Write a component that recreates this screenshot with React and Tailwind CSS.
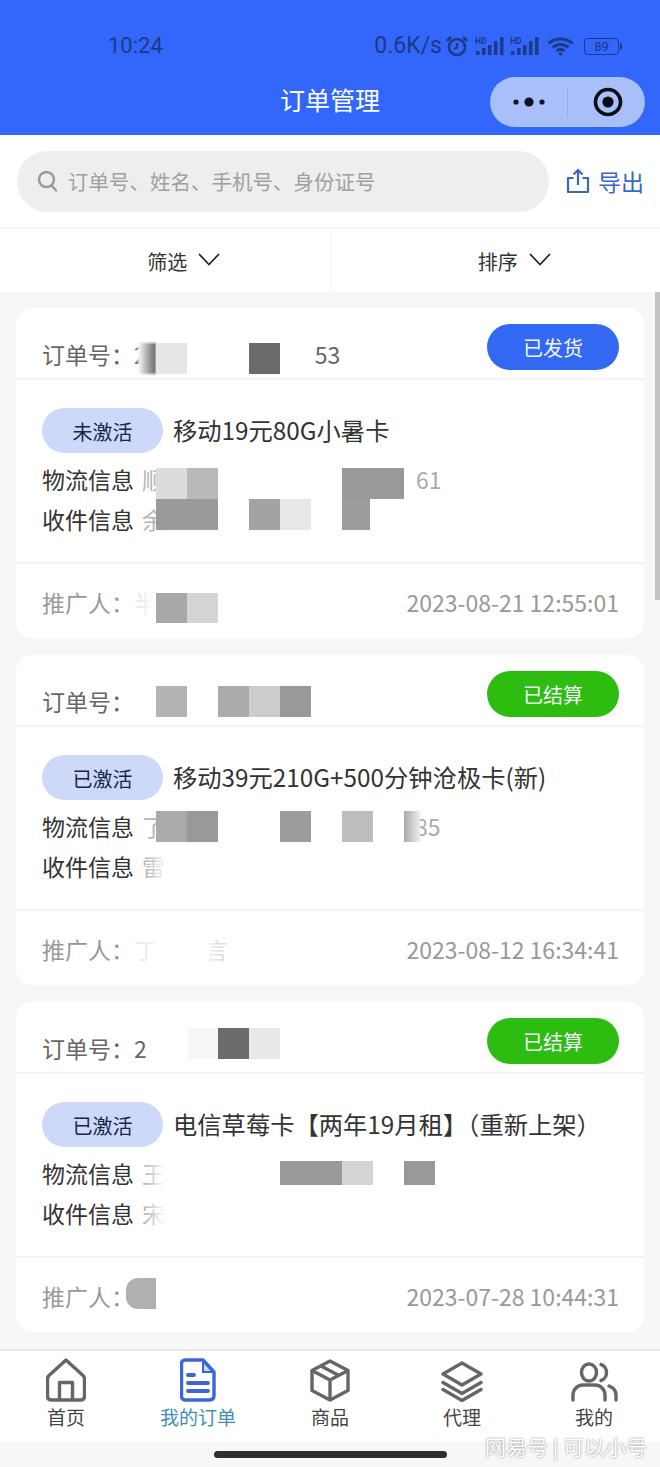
import React from "react";

const cjk = "font-['Noto_Sans_CJK_SC','Noto_Sans',sans-serif]";

const orders = [
  {
    no: "2",
    noTail: "53",
    noTailClass: "ml-[168px]",
    status: "已发货",
    statusClass: "bg-[#3268f2]",
    tag: "未激活",
    title: "移动19元80G小暑卡",
    logistics: "顺",
    logisticsTail: "61",
    logisticsTailClass: "ml-[251px]",
    receiver: "余",
    promoter: "半",
    date: "2023-08-21 12:55:01",
    tiles: [
      "left-[122px] top-[35px] w-[18px] h-[31px] bg-gradient-to-r from-[#ffffff] to-[#666666] blur-[1px]",
      "left-[140px] top-[35px] w-[31px] h-[31px] bg-[#e6e6e6]",
      "left-[233px] top-[35px] w-[31px] h-[31px] bg-[#6b6b6b]",
      "left-[140px] top-[160px] w-[31px] h-[31px] bg-[#dcdcdc]",
      "left-[171px] top-[160px] w-[31px] h-[31px] bg-[#b9b9b9]",
      "left-[326px] top-[160px] w-[62px] h-[31px] bg-[#999999]",
      "left-[140px] top-[191px] w-[62px] h-[31px] bg-[#9a9a9a]",
      "left-[233px] top-[191px] w-[31px] h-[31px] bg-[#a3a3a3]",
      "left-[264px] top-[191px] w-[31px] h-[31px] bg-[#e8e8e8]",
      "left-[326px] top-[191px] w-[28px] h-[31px] bg-[#9c9c9c]",
      "left-[124px] top-[280px] w-[16px] h-[34px] bg-gradient-to-r from-transparent to-white",
      "left-[140px] top-[280px] w-[31px] h-[35px] bg-white",
      "left-[140px] top-[285px] w-[31px] h-[30px] bg-[#a8a8a8]",
      "left-[171px] top-[285px] w-[31px] h-[30px] bg-[#d4d4d4]",
    ],
  },
  {
    no: "",
    noTail: "",
    status: "已结算",
    statusClass: "bg-[#2dbd10]",
    tag: "已激活",
    title: "移动39元210G+500分钟沧极卡(新)",
    logistics: "了",
    logisticsTail: "85",
    logisticsTailClass: "ml-[250px]",
    receiver: "雷",
    promoter: "丁",
    promoterTail: "言",
    date: "2023-08-12 16:34:41",
    tiles: [
      "left-[140px] top-[31px] w-[31px] h-[31px] bg-[#b4b4b4]",
      "left-[202px] top-[31px] w-[31px] h-[31px] bg-[#ababab]",
      "left-[233px] top-[31px] w-[31px] h-[31px] bg-[#cccccc]",
      "left-[264px] top-[31px] w-[31px] h-[31px] bg-[#999999]",
      "left-[140px] top-[156px] w-[31px] h-[31px] bg-[#aaaaaa]",
      "left-[171px] top-[156px] w-[31px] h-[31px] bg-[#999999]",
      "left-[264px] top-[156px] w-[31px] h-[31px] bg-[#9c9c9c]",
      "left-[326px] top-[156px] w-[31px] h-[31px] bg-[#bdbdbd]",
      "left-[388px] top-[156px] w-[16px] h-[31px] bg-gradient-to-r from-[#aaaaaa] to-[#eeeeee]",
      "left-[130px] top-[197px] w-[22px] h-[32px] bg-gradient-to-r from-transparent to-white",
      "left-[124px] top-[280px] w-[24px] h-[34px] bg-gradient-to-r from-transparent to-white",
      "left-[187px] top-[280px] w-[16px] h-[34px] bg-gradient-to-r from-white to-transparent",
    ],
  },
  {
    no: "2",
    noTail: "",
    status: "已结算",
    statusClass: "bg-[#2dbd10]",
    tag: "已激活",
    title: "电信草莓卡【两年19月租】（重新上架）",
    logistics: "王",
    logisticsTail: "",
    receiver: "宋",
    promoter: "",
    date: "2023-07-28 10:44:31",
    tiles: [
      "left-[172px] top-[26px] w-[31px] h-[31px] bg-[#f6f6f6]",
      "left-[202px] top-[26px] w-[31px] h-[31px] bg-[#6b6b6b]",
      "left-[233px] top-[26px] w-[31px] h-[31px] bg-[#e9e9e9]",
      "left-[264px] top-[159px] w-[62px] h-[24px] bg-[#999999]",
      "left-[326px] top-[159px] w-[31px] h-[24px] bg-[#d4d4d4]",
      "left-[388px] top-[159px] w-[31px] h-[24px] bg-[#999999]",
      "left-[128px] top-[156px] w-[22px] h-[32px] bg-gradient-to-r from-transparent to-white",
      "left-[128px] top-[197px] w-[22px] h-[32px] bg-gradient-to-r from-transparent to-white",
      "left-[110px] top-[276px] w-[30px] h-[31px] rounded-l-[12px] bg-[#b0b0b0]",
    ],
  },
];

function OrderCard({ order }) {
  return (
    <div className="relative h-[330px] shrink-0 overflow-hidden rounded-[16px] bg-white">
      <div className="flex h-[72px] justify-between border-b-2 border-[#f3f3f3] pl-[26px] pr-[25px]">
        <div className="mt-[28px] flex h-[36px] items-center text-[23px] text-[#666666]">
          <span>订单号：</span>
          <span>{order.no}</span>
          {order.noTail && <span className={order.noTailClass}>{order.noTail}</span>}
        </div>
        <div className={`mt-[16px] flex h-[46px] w-[132px] items-center justify-center rounded-full pt-[2px] text-[20px] text-[#f2f6ff] ${order.statusClass}`}>
          {order.status}
        </div>
      </div>

      <div className="h-[184px] border-b-2 border-[#f3f3f3] pl-[26px] pt-[28px]">
        <div className="flex h-[45px] items-center">
          <div className="flex h-[45px] w-[121px] items-center justify-center rounded-full bg-[#ccd9f8] pt-[2px] text-[20px] text-[#1a2544]">
            {order.tag}
          </div>
          <div className="ml-[10px] text-[24.3px] text-[#333333]">{order.title}</div>
        </div>
        <div className="mt-[6px] flex h-[40px] items-center text-[23px] text-[#333333]">
          <span>物流信息</span>
          <span className="ml-[8px] text-[#b5b5b5]">{order.logistics}</span>
          {order.logisticsTail && (
            <span className={`text-[#aaaaaa] ${order.logisticsTailClass}`}>{order.logisticsTail}</span>
          )}
        </div>
        <div className="flex h-[40px] items-center text-[23px] text-[#333333]">
          <span>收件信息</span>
          <span className="ml-[8px] text-[#b5b5b5]">{order.receiver}</span>
        </div>
      </div>

      <div className="flex h-[74px] items-center justify-between pl-[26px] pr-[25px] pt-[3px] text-[23px] text-[#999999]">
        <div className="flex items-center">
          <span>推广人：</span>
          <span className="text-[#e8e8e8]">{order.promoter}</span>
          {order.promoterTail && <span className="ml-[48px] text-[#dddddd]">{order.promoterTail}</span>}
        </div>
        <span>{order.date}</span>
      </div>

      {order.tiles.map((t) => (
        <div key={t} className={`absolute ${t}`} />
      ))}
    </div>
  );
}

function StatusIcons() {
  return (
    <div className="flex items-center text-[#1c3a86]">
      <svg width="24" height="22" viewBox="0 0 24 22" fill="none" stroke="currentColor" className="ml-[3px]">
        <circle cx="12" cy="12" r="8" strokeWidth="2.6" />
        <path d="M12 8v4.500l-3 1.500" strokeWidth="2.2" />
        <path d="M2 6l4-4M22 6l-4-4" strokeWidth="2.8" />
      </svg>
      {[0, 1].map((i) => (
        <svg key={i} width="29" height="20" viewBox="0 0 29 20" className="ml-[6px]" fill="currentColor">
          <rect x="1" y="15" width="3.500" height="4" />
          <rect x="7" y="12" width="3.500" height="7" />
          <rect x="13" y="9" width="3.500" height="10" />
          <rect x="19" y="5" width="3.500" height="14" />
          <rect x="25" y="1" width="3.500" height="18" />
          <text x="0" y="8" fontSize="8.500" fontWeight="700" fontFamily="Roboto, sans-serif">HD</text>
        </svg>
      ))}
      <svg width="27" height="20" viewBox="0 0 27 20" fill="none" stroke="currentColor" strokeWidth="3" className="ml-[8px]">
        <path d="M1.500 7.500C8 1.500 19 1.500 25.500 7.500" />
        <path d="M5.500 11.500C10 7.500 17 7.500 21.500 11.500" />
        <path d="M9.500 15C12 13 15 13 17.500 15" />
        <circle cx="13.500" cy="18" r="1.800" fill="currentColor" stroke="none" />
      </svg>
      <div className="ml-[10px] flex items-center">
        <div className="flex h-[17px] w-[35px] items-center justify-center rounded-[4px] border-[1.5px] border-current text-[13px] leading-none">
          89
        </div>
        <div className="ml-[1px] h-[7px] w-[2px] rounded-r-full bg-current" />
      </div>
    </div>
  );
}

function Header() {
  return (
    <div className="relative h-[135px] shrink-0 bg-[#3366fb]">
      <div className="flex h-[92px] items-start pl-[108px] pr-[38px] pt-[31px] font-['Roboto',sans-serif] text-[22px] leading-[30px] text-[#1c3a86]">
        <span>10:24</span>
        <div className="ml-auto flex items-center">
          <span className="text-[23px]">0.6K/s</span>
          <StatusIcons />
        </div>
      </div>
      <div className="absolute left-0 right-0 top-[82px] text-center text-[25px] leading-[34px] text-white">订单管理</div>
      <div className="absolute left-[490px] top-[77px] flex h-[50px] w-[155px] items-center rounded-full bg-[#a8bffa]">
        <svg width="77" height="50" viewBox="0 0 77 50" fill="#10141f">
          <circle cx="26" cy="25" r="2.600" />
          <circle cx="39" cy="25" r="4.600" />
          <circle cx="52" cy="25" r="2.600" />
        </svg>
        <div className="h-[30px] w-px bg-[#94aceb]" />
        <svg width="77" height="50" viewBox="0 0 77 50" fill="none">
          <circle cx="40" cy="25" r="12.500" stroke="#0b0d14" strokeWidth="3.600" />
          <circle cx="40" cy="25" r="5.600" fill="#0b0d14" />
        </svg>
      </div>
    </div>
  );
}

function SearchBar() {
  return (
    <div className="flex h-[94px] shrink-0 items-center border-b-2 border-[#f6f6f6] bg-white pl-[17px]">
      <div className="flex h-[61px] w-[532px] items-center rounded-full bg-[#eeeeee] pl-[20px] text-[20.5px] text-[#a0a0a0]">
        <svg width="21" height="22" viewBox="0 0 21 22" fill="none" stroke="#999999" strokeWidth="2.400">
          <circle cx="9.500" cy="9.500" r="7.500" />
          <path d="M15 16l4 4.500" strokeLinecap="round" />
        </svg>
        <span className="ml-[10px]">订单号、姓名、手机号、身份证号</span>
      </div>
      <svg width="24" height="26" viewBox="0 0 24 26" fill="none" stroke="#3a66c8" strokeWidth="2.200" className="ml-[17px]">
        <path d="M7.500 10H2v14h20V10h-5.500" strokeLinejoin="round" />
        <path d="M12 17V2M7.500 6.500L12 2l4.500 4.500" />
      </svg>
      <span className="ml-[8px] text-[23px] text-[#3a66c8]">导出</span>
    </div>
  );
}

function Tabs() {
  return (
    <div className="flex h-[63px] shrink-0 bg-white text-[20px] text-[#333333]">
      {["筛选", "排序"].map((label, i) => (
        <div key={label} className={`flex flex-1 items-center justify-center pl-[38px] ${i === 0 ? "border-r border-[#f3f3f3]" : ""}`}>
          <span className="pt-[2px]">{label}</span>
          <svg width="22" height="13" viewBox="0 0 22 13" fill="none" stroke="#222222" strokeWidth="1.700" className="ml-[11px] mb-[2px]">
            <path d="M1 1l10 10.500L21 1" />
          </svg>
        </div>
      ))}
    </div>
  );
}

const tabIcons = {
  home: (
    <svg width="40" height="44" viewBox="0 0 40 44" fill="none" stroke="#666666" strokeWidth="3.400" strokeLinejoin="round">
      <path d="M20 2L3 17.500c-1 1-1.500 2-1.500 3.500V38c0 2.500 1.500 4 4 4h29c2.500 0 4-1.500 4-4V21c0-1.500-.5-2.500-1.500-3.500Z" />
      <path d="M13.500 42V24.500h13V42" />
    </svg>
  ),
  order: (
    <svg width="36" height="44" viewBox="0 0 36 44" fill="none">
      <path d="M5 2h18l11 12v23.500c0 3-2 4.500-4.500 4.500H5c-2 0-3.500-1.500-3.500-4V5.500C1.500 3.500 3 2 5 2Z" stroke="#3a66d6" strokeWidth="3.400" strokeLinejoin="round" />
      <path d="M23 3v11h10Z" fill="#c8d5f5" stroke="#3a66d6" strokeWidth="2" />
      <path d="M8 17h6M8 25h20M8 33h20" stroke="#3a66d6" strokeWidth="3.800" strokeLinecap="round" />
    </svg>
  ),
  goods: (
    <svg width="40" height="43" viewBox="0 0 40 43" fill="none" stroke="#666666" strokeWidth="3.400" strokeLinejoin="round">
      <path d="M20 2L38 11.500v20L20 41 2 31.500v-20Z" />
      <path d="M2 11.500L20 21l18-9.500M20 21v20" />
      <path d="M11 7l18 9.500" />
    </svg>
  ),
  agent: (
    <svg width="42" height="41" viewBox="0 0 42 41" fill="none" stroke="#666666" strokeWidth="3.400" strokeLinejoin="round" strokeLinecap="round">
      <path d="M21 2L40 13 21 24 2 13Z" />
      <path d="M2 21.500L21 32.500 40 21.500" />
      <path d="M2 28.500L21 39.500 40 28.500" />
    </svg>
  ),
  mine: (
    <svg width="47" height="40" viewBox="0 0 47 40" fill="none" stroke="#666666" strokeWidth="3.400" strokeLinecap="round">
      <ellipse cx="18" cy="10.500" rx="7.500" ry="8.500" />
      <path d="M2 38v-5c0-6 5-10 10-10h12c5 0 10 4 10 10v5" />
      <path d="M30 2.500c3.500 1 5.500 4.500 5.500 8s-2 7-5.500 8" />
      <path d="M38 24c4 1.500 7 5 7 9v5" />
    </svg>
  ),
};

const tabs = [
  { key: "home", label: "首页", text: "text-[#444444]" },
  { key: "order", label: "我的订单", text: "text-[#3f8fb5]" },
  { key: "goods", label: "商品", text: "text-[#444444]" },
  { key: "agent", label: "代理", text: "text-[#444444]" },
  { key: "mine", label: "我的", text: "text-[#444444]" },
];

function TabBar() {
  return (
    <div className="flex h-[93px] shrink-0 border-t-2 border-[#e9e9e9] bg-white">
      {tabs.map((t) => (
        <div key={t.key} className="flex w-[132px] flex-col items-center">
          <div className="flex h-[51px] items-end">{tabIcons[t.key]}</div>
          <div className={`mt-[3px] text-[19px] leading-[24px] ${t.text}`}>{t.label}</div>
        </div>
      ))}
    </div>
  );
}

export default function App() {
  return (
    <div className={`relative flex h-[1467px] w-[660px] flex-col overflow-hidden bg-[#f7f7f7] ${cjk}`}>
      <Header />
      <SearchBar />
      <Tabs />
      <div className="flex min-h-0 flex-1 flex-col gap-[17px] overflow-hidden px-[16px] pt-[16px]">
        {orders.map((o) => (
          <OrderCard key={o.date} order={o} />
        ))}
      </div>
      <TabBar />
      <div className="flex h-[25px] shrink-0 items-start justify-center pt-[9px]">
        <div className="h-[7px] w-[233px] rounded-full bg-[#2f2f2f]" />
      </div>
      <div className="absolute right-0 top-[292px] h-[308px] w-[5px] bg-[#c4c4c4]" />
      <div className="absolute left-[485px] top-[1431px] text-[21px] text-white [text-shadow:0_0_2px_#777777]">网易号 | 可以小号</div>
    </div>
  );
}
